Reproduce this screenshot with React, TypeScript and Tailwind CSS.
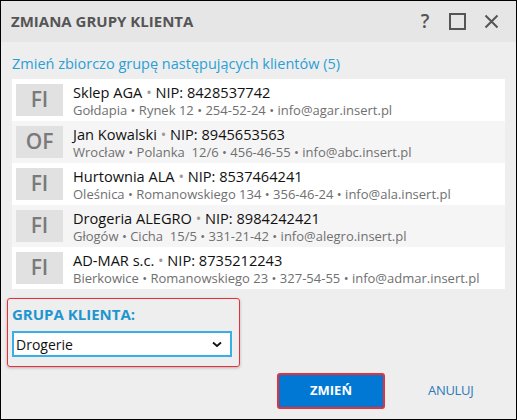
import React from "react";

const clients = [
  { tag: "FI", name: "Sklep AGA", nip: "8428537742", sub: ["Gołdapia", "Rynek 12", "254-52-24", "info@agar.insert.pl"] },
  { tag: "OF", name: "Jan Kowalski", nip: "8945653563", sub: ["Wrocław", "Polanka  12/6", "456-46-55", "info@abc.insert.pl"] },
  { tag: "FI", name: "Hurtownia ALA", nip: "8537464241", sub: ["Oleśnica", "Romanowskiego 134", "356-46-24", "info@ala.insert.pl"] },
  { tag: "FI", name: "Drogeria ALEGRO", nip: "8984242421", sub: ["Głogów", "Cicha  15/5", "331-21-42", "info@alegro.insert.pl"] },
  { tag: "FI", name: "AD-MAR s.c.", nip: "8735212243", sub: ["Bierkowice", "Romanowskiego 23", "327-54-55", "info@admar.insert.pl"] },
];

export default function App() {
  return (
    <div
      className="w-[517px] h-[420px] border border-black bg-[#eeeeee] flex flex-col overflow-hidden"
      style={{ fontFamily: '"Open Sans", "Noto Sans", sans-serif' }}
    >
      <div className="h-[41px] shrink-0 bg-[#e6e6e6] flex items-center pl-[10px] pr-[17px]">
        <div className="flex-1 text-[15px] font-bold text-[#555555]">ZMIANA GRUPY KLIENTA</div>
        <div className="flex items-center text-[#555555]">
          <span className="text-[19px] leading-none w-[14px] text-center font-semibold">?</span>
          <svg className="ml-[17px]" width="17" height="17" viewBox="0 0 17 17">
            <rect x="1" y="1" width="15" height="15" fill="none" stroke="#555" strokeWidth="2" />
          </svg>
          <svg className="ml-[18px]" width="15" height="15" viewBox="0 0 15 15">
            <path d="M1.5 1.5 L13.5 13.5 M13.5 1.5 L1.5 13.5" stroke="#555" strokeWidth="2" />
          </svg>
        </div>
      </div>
      <div className="flex-1 flex flex-col px-[11px]">
        <div className="mt-[12px] text-[14.5px] leading-[20px] text-[#2a9fd6]">
          Zmień zbiorczo grupę następujących klientów (5)
        </div>
        <div className="mt-[5px] w-[493px] flex flex-col">
          {clients.map((c, i) => (
            <div
              key={i}
              className={`h-[42px] flex items-center pl-[4px] ${i % 2 === 0 ? "bg-white" : "bg-[#f5f5f5]"}`}
            >
              <div className="w-[47px] h-[32px] bg-[#e1e1e1] flex items-center justify-center text-[21px] font-semibold text-[#7a7a7a]">
                {c.tag}
              </div>
              <div className="ml-[10px] flex flex-col leading-none">
                <div className="text-[14.6px] text-[#111111] leading-[20px]">
                  {c.name} <span className="text-[#999999]">•</span> NIP: {c.nip}
                </div>
                <div className="text-[13px] text-[#707070] leading-[17px]">
                  {c.sub.map((s, j) => (
                    <span key={j}>
                      {j > 0 && <span> • </span>}
                      <span className="whitespace-pre">{s}</span>
                    </span>
                  ))}
                </div>
              </div>
            </div>
          ))}
        </div>
        <div className="mt-[9px] -ml-[5px] w-[233px] h-[69px] border-[1.5px] border-[#e8303a] rounded-[3px] shadow-[0_1px_3px_rgba(0,0,0,0.25)] px-[4px] pt-[4px]">
          <div className="text-[15px] font-bold text-[#1e96cf] leading-[22px]">GRUPA KLIENTA:</div>
          <div className="mt-[6px] h-[26px] w-[220px] bg-white border-2 border-[#3aaee6] flex items-center pl-[2px] pr-[8px]">
            <span className="flex-1 text-[14px] text-[#111111]">Drogerie</span>
            <svg width="10" height="7" viewBox="0 0 10 7">
              <path d="M1 1.5 L5 5 L9 1.5" fill="none" stroke="#111" strokeWidth="1.8" />
            </svg>
          </div>
        </div>
        <div className="mt-[6px] flex items-center">
          <div className="ml-[265px] w-[108px] h-[36px] bg-[#0078d4] border-2 border-[#e8303a] rounded-[3px] flex items-center justify-center text-white text-[13px] font-bold">
            ZMIEŃ
          </div>
          <div className="ml-[43px] text-[13px] text-[#2a7ab8] tracking-[-0.3px]">ANULUJ</div>
        </div>
      </div>
    </div>
  );
}
